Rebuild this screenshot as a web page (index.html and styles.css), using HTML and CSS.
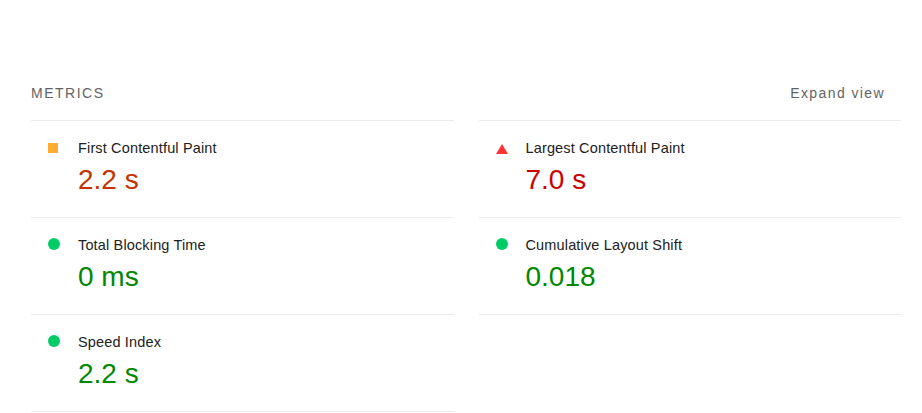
FILE: index.html
```html
<!DOCTYPE html>
<html lang="en">
<head>
<meta charset="utf-8">
<title>Metrics</title>
<link rel="stylesheet" href="styles.css">
</head>
<body>
<section class="metrics">
  <header class="metrics-header">
    <span class="metrics-title">METRICS</span>
    <span class="metrics-toggle">Expand view</span>
  </header>
  <div class="metrics-grid">
    <div class="metric metric--top">
      <span class="icon icon--average"></span>
      <div class="metric-body">
        <div class="metric-title">First Contentful Paint</div>
        <div class="metric-value value--average">2.2&nbsp;s</div>
      </div>
    </div>
    <div class="metric metric--top">
      <span class="icon icon--fail"></span>
      <div class="metric-body">
        <div class="metric-title">Largest Contentful Paint</div>
        <div class="metric-value value--fail">7.0&nbsp;s</div>
      </div>
    </div>
    <div class="metric">
      <span class="icon icon--pass"></span>
      <div class="metric-body">
        <div class="metric-title">Total Blocking Time</div>
        <div class="metric-value value--pass">0&nbsp;ms</div>
      </div>
    </div>
    <div class="metric">
      <span class="icon icon--pass"></span>
      <div class="metric-body">
        <div class="metric-title">Cumulative Layout Shift</div>
        <div class="metric-value value--pass">0.018</div>
      </div>
    </div>
    <div class="metric">
      <span class="icon icon--pass"></span>
      <div class="metric-body">
        <div class="metric-title">Speed Index</div>
        <div class="metric-value value--pass">2.2&nbsp;s</div>
      </div>
    </div>
  </div>
</section>
</body>
</html>
```
FILE: styles.css
```css
* { box-sizing: border-box; }
html, body { margin: 0; padding: 0; background: #fff; }
body {
  font-family: "Liberation Sans", Arial, sans-serif;
  color: #212121;
}
.metrics {
  width: 870px;
  margin-left: 31px;
  padding-top: 83px;
}
.metrics-header {
  display: flex;
  justify-content: space-between;
  align-items: center;
  padding-right: 16px;
  margin-bottom: 17px;
  font-size: 14px;
  line-height: 20px;
  letter-spacing: 1.5px;
  color: #636363;
}
.metrics-toggle { letter-spacing: 1.4px; }
.metrics-grid {
  display: grid;
  grid-template-columns: 1fr 1fr;
  column-gap: 25px;
}
.metric {
  display: flex;
  align-items: flex-start;
  height: 97px;
  padding: 17px 0 0 17px;
  border-bottom: 1px solid #ebebeb;
}
.metric--top {
  border-top: 1px solid #ebebeb;
  height: 98px;
}
.icon {
  flex: none;
  display: block;
  margin-right: 18px;
}
.icon--average {
  width: 10px;
  height: 10px;
  margin-top: 5px;
  margin-right: 20px;
  background: #ffaa33;
}
.icon--fail {
  width: 0;
  height: 0;
  margin-top: 6px;
  border-left: 6px solid transparent;
  border-right: 6px solid transparent;
  border-bottom: 10px solid #ff3333;
}
.icon--pass {
  width: 12px;
  height: 12px;
  margin-top: 3px;
  border-radius: 50%;
  background: #00cc66;
}
.metric-title {
  font-size: 14.5px;
  line-height: 20px;
  letter-spacing: 0.15px;
  color: #212121;
}
.metric-value {
  margin-top: 4px;
  font-size: 28px;
  line-height: 36px;
}
.value--average { color: #c33300; }
.value--fail { color: #cc0000; }
.value--pass { color: #008800; }
```
